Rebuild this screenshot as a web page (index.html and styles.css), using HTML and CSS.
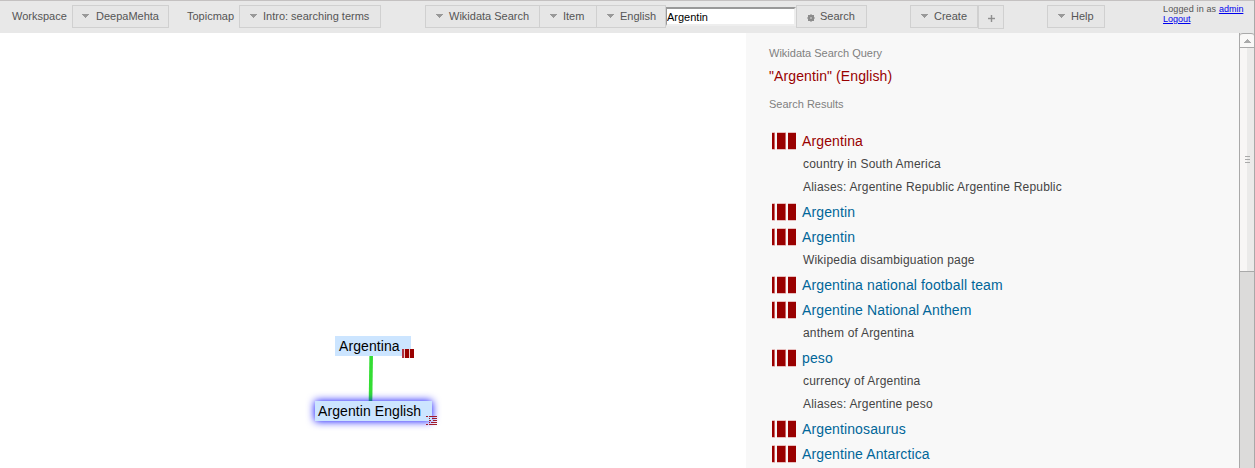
FILE: index.html
```html
<!DOCTYPE html>
<html lang="en">
<head>
<meta charset="utf-8">
<title>DeepaMehta</title>
<link rel="stylesheet" href="styles.css">
</head>
<body>
<svg class="defs" width="0" height="0">
  <symbol id="arrow" viewBox="0 0 7 4"><path d="M0 0h7v1H6v1H5v1H4v1H3V3H2V2H1V1H0z" fill="#999"/></symbol>
  <symbol id="bars" viewBox="0 0 26 18"><path d="M1 1h3v16H1zM6 1h9v16H6zM17 1h8v16h-8z" fill="#900"/><path d="M1 .5h3M6 .5h9M17 .5h8M1 17.5h3M6 17.5h9M17 17.5h8" stroke="#d99" opacity=".6"/><path d="M3 1h1v16H3zM14 1h1v16h-1z" fill="#c66"/></symbol>
</svg>
<header class="toolbar">
  <span class="label workspace-label">Workspace</span>
  <button class="button workspace"><svg class="arrow"><use href="#arrow"/></svg>DeepaMehta</button>
  <span class="label topicmap-label">Topicmap</span>
  <button class="button topicmap"><svg class="arrow"><use href="#arrow"/></svg>Intro: searching terms</button>
  <div class="search">
    <button class="button mode"><svg class="arrow"><use href="#arrow"/></svg>Wikidata Search</button>
    <button class="button kind"><svg class="arrow"><use href="#arrow"/></svg>Item</button>
    <button class="button lang"><svg class="arrow"><use href="#arrow"/></svg>English</button>
    <input class="query" type="text" value="Argentin">
    <button class="button go"><svg class="gear" viewBox="0 0 8 8"><path d="M1.5 1.5h5v5h-5zM4 0v8M0 4h8M1 1l6 6M7 1L1 7" fill="#888" stroke="#8c8c8c"/><path d="M3.2 3.2h1.6v1.6H3.2z" fill="#ccc"/></svg>Search</button>
  </div>
  <button class="button create"><svg class="arrow"><use href="#arrow"/></svg>Create</button>
  <button class="button plus" aria-label="Add"><svg viewBox="0 0 7 7"><path d="M3 0h1v3h3v1H4v3H3V4H0V3h3z" fill="#888" stroke="#999" stroke-width=".5"/></svg></button>
  <button class="button help"><svg class="arrow"><use href="#arrow"/></svg>Help</button>
  <div class="login">Logged in as <a href="#">admin</a><br><a class="logout" href="#">Logout</a></div>
</header>
<main class="main">
  <section class="canvas">
    <svg class="edge" viewBox="0 0 8 48"><path d="M4.2 0L3.5 48" stroke="#3d3" stroke-width="3.6" fill="none"/></svg>
    <div class="topic argentina">Argentina<svg class="badge" viewBox="0 0 12 9"><path d="M3 0h4v9H3zM8 0h4v9H8z" fill="#900"/><path d="M0 0h2v9H0z" fill="#b03040"/><path d="M2 0h1v9H2zM7 0h1v9H7z" fill="#ecc"/></svg></div>
    <div class="topic selected">Argentin English<svg class="badge" viewBox="0 0 11 9"><path d="M0 0h2v1H0zM3 0h8v1H3zM3 2h1v1H3zM6 2h5v1H6zM3 4h2v1H3zM7 4h4v1H7zM3 6h1v1H3zM5 6h6v1H5zM0 8h2v1H0zM3 8h8v1H3z" fill="#a11c2c"/></svg></div>
  </section>
  <aside class="detail">
    <div class="field">Wikidata Search Query</div>
    <div class="value">"Argentin" (English)</div>
    <div class="field results-label">Search Results</div>
    <div class="results">
      <div class="item current"><svg class="bars"><use href="#bars"/></svg>Argentina</div>
      <div class="note">country in South America</div>
      <div class="note">Aliases: Argentine Republic Argentine Republic</div>
      <div class="item"><svg class="bars"><use href="#bars"/></svg>Argentin</div>
      <div class="item"><svg class="bars"><use href="#bars"/></svg>Argentin</div>
      <div class="note">Wikipedia disambiguation page</div>
      <div class="item"><svg class="bars"><use href="#bars"/></svg>Argentina national football team</div>
      <div class="item"><svg class="bars"><use href="#bars"/></svg>Argentine National Anthem</div>
      <div class="note">anthem of Argentina</div>
      <div class="item"><svg class="bars"><use href="#bars"/></svg>peso</div>
      <div class="note">currency of Argentina</div>
      <div class="note">Aliases: Argentine peso</div>
      <div class="item"><svg class="bars"><use href="#bars"/></svg>Argentinosaurus</div>
      <div class="item"><svg class="bars"><use href="#bars"/></svg>Argentine Antarctica</div>
    </div>
  </aside>
  <div class="scrollbar">
    <div class="scroll-up"><svg viewBox="0 0 7 4"><path d="M3 0h1v1h1v1h1v1h1v1H0V3h1V2h1V1h1z" fill="#aaa"/></svg></div>
    <div class="thumb"><i></i><i></i><i></i></div>
  </div>
</main>
</body>
</html>
```
FILE: styles.css
```css
* { box-sizing: border-box; }
body { margin: 0; width: 1255px; height: 468px; overflow: hidden; display: flex; flex-direction: column; background: #fff; border-right: 1px solid #a9a9a9; font-family: "Liberation Sans", Arial, sans-serif; }
.defs { display: none; }
.toolbar { flex: none; height: 33px; display: flex; align-items: flex-start; background: #e8e8e8; border-top: 1px solid #c4c1c1; padding-top: 4px; font-size: 11px; color: #555; white-space: nowrap; }
.label { line-height: 22px; }
.workspace-label { width: 60px; margin-left: 12px; }
.topicmap-label { width: 52px; margin-left: 18px; }
.button { height: 23px; margin: 0; padding: 0 0 1px 10px; display: flex; align-items: center; flex: none; font: inherit; color: #555; background: #e6e6e6; border: 1px solid #d0d0d0; white-space: nowrap; }
.arrow { width: 7px; height: 4px; margin-right: 6px; flex: none; }
.workspace { width: 97px; }
.workspace .arrow { margin-right: 7px; margin-left: -1px; }
.topicmap { width: 142px; }
.search { display: flex; margin-left: 44px; }
.mode { width: 115px; }
.kind { width: 58px; margin-left: -1px; }
.lang { width: 70px; margin-left: -1px; }
.query { width: 130px; height: 19px; margin: 2px 0 0; padding: 1px 0 0; border: 2px solid; border-width: 2px 2px 2px 1px; border-color: #999 #eee #eee #999; background: #fff; font: 11px "Liberation Sans", Arial, sans-serif; color: #000; }
.go { width: 71px; }
.gear { width: 8px; height: 8px; margin: 3px 5px 0 0; }
.create { width: 68px; margin-left: 43px; }
.plus { width: 26px; height: 24px; padding: 2px 0 0; justify-content: center; }
.plus svg { width: 7px; height: 7px; }
.help { width: 58px; margin-left: 43px; }
.login { margin-left: 58px; margin-top: -1px; font-size: 9px; line-height: 10px; letter-spacing: .14px; }
.login a { color: #00e; letter-spacing: 0; }
.main { flex: 1; min-height: 0; display: flex; }
.canvas { width: 746px; position: relative; flex: none; }
.edge { position: absolute; left: 367px; top: 321px; width: 8px; height: 48px; }
.topic { position: absolute; height: 20px; padding-left: 4px; background: #cce5ff; font-size: 14px; line-height: 20px; letter-spacing: .08px; white-space: nowrap; }
.argentina { left: 335px; top: 303px; width: 76px; }
.selected { left: 315px; top: 368px; width: 117px; padding-left: 3px; box-shadow: 0 0 8px 0 #00f; }
.badge { position: absolute; width: 12px; height: 9px; left: 67px; top: 13px; }
.selected .badge { width: 11px; left: 111px; top: 15px; }
.detail { flex: 1; background: #f8f8f8; padding: 14px 0 0 23px; overflow: hidden; white-space: nowrap; }
.field { font-size: 11px; line-height: 13px; color: #808080; }
.value { font-size: 14px; line-height: 16px; color: #900; margin: 8px 0 14px; letter-spacing: .1px; }
.results { margin-top: 17px; }
.item { height: 25px; display: flex; align-items: center; padding-left: 2px; font-size: 14px; color: #069; letter-spacing: .12px; }
.current { color: #900; }
.bars { width: 26px; height: 18px; margin-right: 5px; }
.note { height: 23px; padding-left: 34px; font-size: 12px; line-height: 22px; color: #444; letter-spacing: .19px; }
.scrollbar { width: 15px; flex: none; background: #dcdbda; border-left: 1px solid #a9a9a9; display: flex; flex-direction: column; }
.scroll-up { height: 15px; border: 1px solid #a9a9a9; border-width: 1px 0; border-radius: 3px 3px 0 0; background: #f9f8f7; display: flex; align-items: center; justify-content: center; }
.scroll-up svg { width: 7px; height: 4px; }
.thumb { height: 224px; background: linear-gradient(90deg, #f8f6f5 50%, #ebeae9 50%); border-bottom: 1px solid #a9a9a9; display: flex; flex-direction: column; align-items: center; justify-content: center; gap: 2px; }
.thumb i { width: 5px; height: 1px; background: #aaa; }
```
